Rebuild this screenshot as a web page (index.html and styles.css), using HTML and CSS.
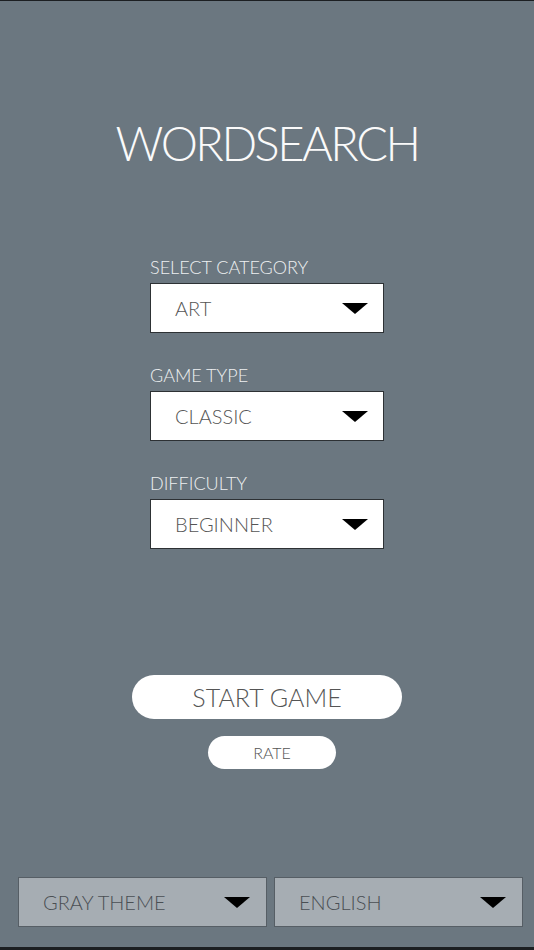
FILE: index.html
```html
<!DOCTYPE html>
<html lang="en">
<head>
    <meta charset="UTF-8">
    <meta name="viewport" content="width=device-width, initial-scale=1.0">
    <title>Wordsearch</title>
    <link rel="stylesheet" href="styles.css">
</head>
<body>
    <div class="screen">
        <h1 class="title">WORDSEARCH</h1>

        <div class="options">
            <div class="field">
                <label>SELECT CATEGORY</label>
                <div class="select">
                    <span>ART</span>
                    <svg class="arrow" width="26" height="11" viewBox="0 0 26 11"><polygon points="0,0 26,0 13,11" /></svg>
                </div>
            </div>
            <div class="field">
                <label>GAME TYPE</label>
                <div class="select">
                    <span>CLASSIC</span>
                    <svg class="arrow" width="26" height="11" viewBox="0 0 26 11"><polygon points="0,0 26,0 13,11" /></svg>
                </div>
            </div>
            <div class="field">
                <label>DIFFICULTY</label>
                <div class="select">
                    <span>BEGINNER</span>
                    <svg class="arrow" width="26" height="11" viewBox="0 0 26 11"><polygon points="0,0 26,0 13,11" /></svg>
                </div>
            </div>
        </div>

        <div class="actions">
            <button class="start-btn">START GAME</button>
            <button class="rate-btn">RATE</button>
        </div>

        <div class="footer">
            <div class="select small">
                <span>GRAY THEME</span>
                <svg class="arrow" width="28" height="11" viewBox="0 0 26 11"><polygon points="0,0 26,0 13,11" /></svg>
            </div>
            <div class="select small">
                <span>ENGLISH</span>
                <svg class="arrow" width="28" height="11" viewBox="0 0 26 11"><polygon points="0,0 26,0 13,11" /></svg>
            </div>
        </div>
    </div>
</body>
</html>
```

FILE: styles.css
```css
body {
    margin: 0;
    background: #1c1f22;
    font-family: Lato, 'Noto Sans', sans-serif;
}

.screen {
    height: 946px;
    margin-top: 1px;
    background: #6b7780;
    display: flex;
    flex-direction: column;
    align-items: center;
}

.title {
    margin: 114px 0 0;
    font-size: 47px;
    font-weight: 300;
    color: #fafafa;
    letter-spacing: -2.5px;
    line-height: 56px;
}

.options {
    margin-top: 85px;
    display: flex;
    flex-direction: column;
    gap: 31px;
}

.field label {
    display: block;
    font-size: 18px;
    font-weight: 300;
    color: #eef0f1;
    line-height: 22px;
    margin-bottom: 5px;
}

.select {
    width: 234px;
    height: 50px;
    box-sizing: border-box;
    background: #fff;
    border: 1.5px solid #2d3134;
    display: flex;
    align-items: center;
    justify-content: space-between;
    padding: 0 15px 0 24px;
    font-size: 20px;
    color: #555;
    font-weight: 300;
}

.arrow polygon {
    fill: #000;
}

.actions {
    margin-top: 126px;
    display: flex;
    flex-direction: column;
    align-items: center;
    gap: 17px;
}

.actions button {
    border: none;
    background: #fff;
    border-radius: 24px;
    font-family: Lato, 'Noto Sans', sans-serif;
    font-weight: 300;
    color: #555;
    cursor: pointer;
}

.start-btn {
    width: 270px;
    height: 44px;
    font-size: 25px;
}

.rate-btn {
    width: 128px;
    height: 33px;
    font-size: 16px;
    margin-left: 10px;
}

.footer {
    margin-top: auto;
    margin-bottom: 20px;
    align-self: flex-start;
    margin-left: 18px;
    display: flex;
    gap: 7px;
}

.select.small {
    width: 249px;
    background: #a6adb3;
    border: 1.5px solid #565e65;
    padding: 0 15px 0 24px;
    color: #4a4f53;
}
```
